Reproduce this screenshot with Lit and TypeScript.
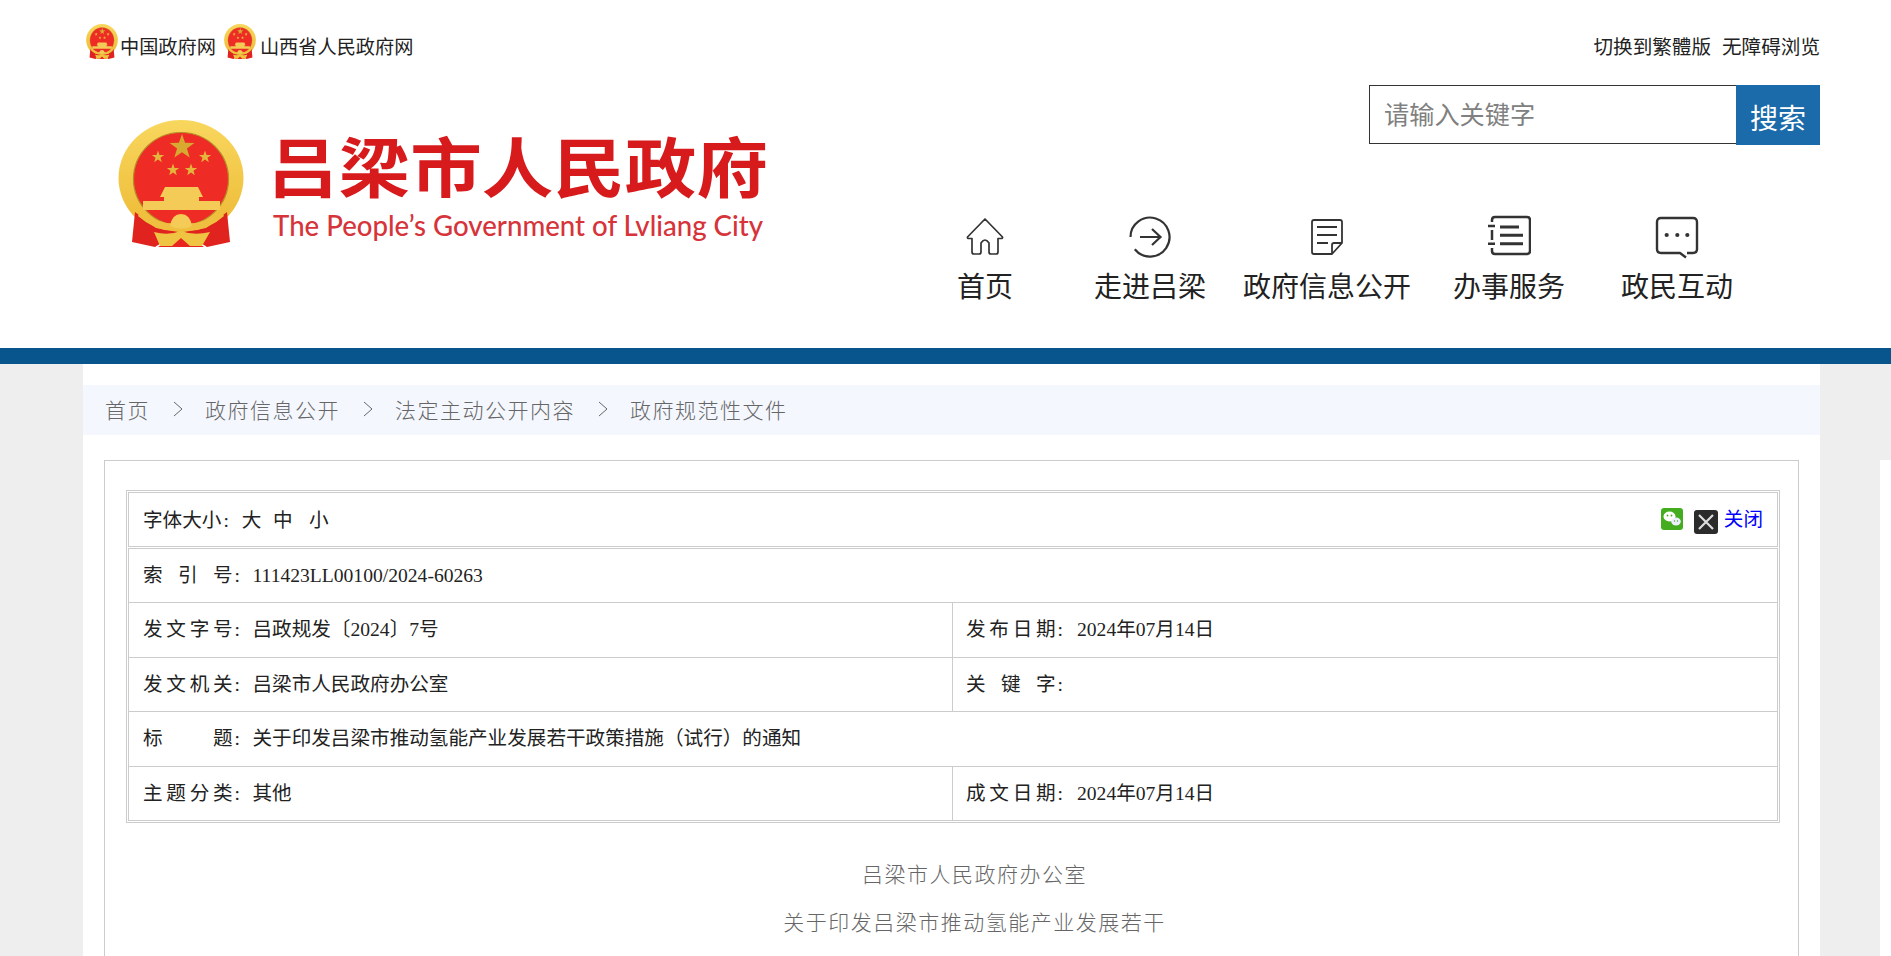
import { LitElement, html, css, svg } from "lit";
import { customElement } from "lit/decorators.js";

const star = (x: number, y: number, r: number, fill: string) => {
  const pts: string[] = [];
  for (let i = 0; i < 10; i++) {
    const a = -Math.PI / 2 + (i * Math.PI) / 5;
    const rr = i % 2 === 0 ? r : r * 0.4;
    pts.push(`${(x + rr * Math.cos(a)).toFixed(2)},${(y + rr * Math.sin(a)).toFixed(2)}`);
  }
  return svg`<polygon points=${pts.join(" ")} fill=${fill}/>`;
};

const emblemSvg = svg`
  <defs>
    <linearGradient id="gold" x1="0" y1="0" x2="0" y2="1">
      <stop offset="0" stop-color="#f8d75e"/><stop offset="1" stop-color="#edb934"/>
    </linearGradient>
  </defs>
  <ellipse cx="63" cy="58" rx="62.500" ry="58" fill="url(#gold)"/>
  <ellipse cx="63" cy="59" rx="47.500" ry="46.500" fill="#ee2b25" stroke="#b58d26" stroke-width="1.200"/>
  ${star(64, 27, 13, "#d8a930")}
  ${star(40, 37, 6.5, "#e4b63c")}
  ${star(87, 37, 6.5, "#e4b63c")}
  ${star(55, 50, 6.5, "#e4b63c")}
  ${star(73, 50, 6.5, "#e4b63c")}
  <path d="M47 67 H80 L85 77 H81 V81 H102 V90 H25 V81 H46 V77 H42 Z" fill="#f3cb56"/>
  <path d="M17 92 L14 122 L37 127 L60 112 L38 108 Z" fill="#e0231e"/>
  <path d="M109 92 L112 122 L89 127 L66 112 L88 108 Z" fill="#e0231e"/>
  <path d="M40 127 L63 112 L86 127 Z" fill="#e8261f"/>
  <path d="M23 90 Q40 106 63 103 Q86 106 103 90 L106 96 Q86 114 63 110 Q40 114 20 96 Z" fill="#efc040"/>
  <path d="M52 106 Q54 94 63 94 Q72 94 74 106 Q63 111 52 106 Z" fill="#f3cb56"/>
  <path d="M36 112 Q50 116 63 111 Q76 116 92 112 L84 126 H72 L63 118 L54 126 H42 Z" fill="#f0c443"/>
`;

const emblem = (cls: string) => html`<svg class=${cls} viewBox="0 0 126 127" preserveAspectRatio="none" aria-hidden="true">${emblemSvg}</svg>`;

type NavItem = { label: string; width: number; icon: unknown };

const navItems: NavItem[] = [
  {
    label: "首页",
    width: 170,
    icon: svg`<path d="M22 4 L39.500 22 Q40 23.500 38 23.500 H35 V37 Q35 39 33 39 H28 Q26 39 26 37 V28 Q22 22 18 28 V37 Q18 39 16 39 H11 Q9 39 9 37 V23.500 H6 Q4 23.500 4.500 22 Z" fill="none" stroke="#333" stroke-width="1.700" stroke-linejoin="round"/>`,
  },
  {
    label: "走进吕梁",
    width: 160,
    icon: svg`<path d="M2.500 22 A19.500 19.500 0 1 1 6.800 34.300" fill="none" stroke="#333" stroke-width="2.200"/><path d="M12 22 H32 M24 14 L32.500 22 L24 30" fill="none" stroke="#333" stroke-width="2.200"/>`,
  },
  {
    label: "政府信息公开",
    width: 194,
    icon: svg`<path d="M37 28 V7 Q37 5 35 5 H9 Q7 5 7 7 V37 Q7 39 9 39 H27 L37 28 H29 Q27 28 27 30 V39" fill="none" stroke="#333" stroke-width="1.800" stroke-linejoin="round"/><path d="M12 12 H32 M12 20 H32 M12 28 H23" stroke="#333" stroke-width="1.800"/>`,
  },
  {
    label: "办事服务",
    width: 170,
    icon: svg`<path d="M5 7 V5 Q5 2 8 2 H40 Q43 2 43 5 V36 Q43 39 40 39 H8 Q5 39 5 36 V33 M5 25 V15" fill="none" stroke="#333" stroke-width="2.500"/><path d="M13 12 H32 M13 20.300 H36 M13 28.700 H36" stroke="#333" stroke-width="3"/><path d="M1 11 H8 M1 28.700 H8" stroke="#333" stroke-width="2.600"/>`,
  },
  {
    label: "政民互动",
    width: 166,
    icon: svg`<path d="M32 38 H38 Q42 38 42 34 V7 Q42 3 38 3 H6 Q2 3 2 7 V34 Q2 38 6 38 H25 L31 42.500" fill="none" stroke="#333" stroke-width="2.400" stroke-linejoin="round"/><circle cx="11.700" cy="20" r="2.100" fill="#333"/><circle cx="22.300" cy="20" r="2.100" fill="#333"/><circle cx="32.300" cy="20" r="2.100" fill="#333"/>`,
  },
];

const crumbs = ["首页", "政府信息公开", "法定主动公开内容", "政府规范性文件"];

@customElement("app-root")
export class AppRoot extends LitElement {
  static styles = css`
    :host {
      display: block;
      position: relative;
      height: 956px;
      overflow: hidden;
      background: #eee;
      font-family: "Liberation Serif", "Noto Sans CJK SC", serif;
      color: #222;
    }
    a { color: inherit; text-decoration: none; }

    .header { background: #fff; height: 348px; padding: 0 71px 0 83px; box-sizing: border-box; display: flex; flex-direction: column; }
    .top { display: flex; justify-content: space-between; height: 85px; font-family: "Noto Sans CJK SC", sans-serif; }
    .top-left { display: flex; align-items: flex-start; padding-top: 24px; font-size: 19.200px; line-height: 46px; }
    .top-right { display: flex; gap: 11px; font-size: 19.600px; line-height: 46px; padding-top: 24px; }
    .small-emblem { width: 32px; height: 35px; margin: 0 2px 0 3px; }
    .top-link { margin-right: 5px; }
    .top-link2 { margin-left: 2px; }
    .top-left a, .top-right a { margin-top: -1px; }

    .main { display: flex; justify-content: space-between; flex: 1; }
    .logo { width: 680px; height: 145px; margin: 31px 0 0 33px; display: block; overflow: visible; }
    .logo-cn { font-family: "Noto Sans CJK SC", sans-serif; font-weight: 700; font-size: 65px; fill: #d71a1c; }
    .logo-en { font-family: Lato, "Liberation Sans", sans-serif; font-weight: 500; font-size: 28px; fill: #d6343a; }

    .right { display: flex; flex-direction: column; align-items: flex-end; }
    .search { display: flex; width: 451px; height: 60px; }
    .search-input { flex: 1; height: 59px; box-sizing: border-box; border: 1px solid #333; border-right: 0; padding: 0 14px 4px; display: flex; align-items: center; font-family: "Noto Sans CJK SC", sans-serif; font-size: 25.200px; color: #808080; }
    .search-btn { width: 84px; background: #1b6aaa; color: #fff; font-size: 28px; font-family: "Noto Sans CJK SC", sans-serif; display: flex; align-items: center; justify-content: center; padding-top: 3px; box-sizing: border-box; }

    .nav { display: flex; margin-top: 70px; margin-right: 60px; }
    .nav-item { display: flex; flex-direction: column; align-items: center; font-family: "Noto Sans CJK SC", sans-serif; font-size: 28px; line-height: 40px; color: #222; }
    .nav-icon { width: 44px; height: 44px; margin-bottom: 5.500px; }

    .bar { height: 16px; background: #08548c; }

    .page { margin: 0 71px 0 83px; background: #fff; height: 592px; padding-top: 21px; box-sizing: border-box; }
    .crumbs { height: 50px; background: #f4f7fe; display: flex; align-items: center; padding: 0 0 2px 22px; box-sizing: border-box; font-size: 21px; color: #666; letter-spacing: 1.500px; font-family: "Noto Sans CJK SC", sans-serif; font-weight: 300; }
    .sep { width: 10px; height: 16px; margin: 0 22.500px; }

    .box { margin: 25px 21px 0 21px; border: 1px solid #ccc; border-bottom: 0; height: 496px; padding: 29px 18px 0 21px; box-sizing: border-box; }
    .meta { border: 1px solid #ccc; padding: 1px; }
    .row { display: grid; grid-template-columns: 823px 1fr; height: 54.500px; border: 1px solid #ccc; border-top: 0; box-sizing: border-box; font-size: 19.600px; line-height: 28px; }
    .row.single { grid-template-columns: 1fr; }
    .row.head { border-top: 1px solid #ccc; margin-bottom: 1px; height: 55px; justify-content: space-between; display: flex; }
    .row.head .cell { padding-top: 2px; }
    .row.idx { border-top: 1px solid #ccc; height: 55px; }
    .cell { display: flex; align-items: center; padding: 1px 0 0 14px; box-sizing: border-box; white-space: pre; }
    .cell + .cell { border-left: 1px solid #ccc; padding-left: 13px; }
    .label { display: flex; justify-content: space-between; width: 99px; margin-right: 10.500px; }
    .cell + .cell .label { margin-right: 12px; }
    .label span:last-child { letter-spacing: 2px; }
    .fs-label { margin-right: 13px; }
    .colon { margin-left: 2px; }
    .fs-big { margin-right: 11.700px; }
    .fs-mid { margin-right: 16.400px; }
    .tools { display: flex; align-items: flex-start; padding-right: 14px; }
    .wx { width: 22px; height: 22px; margin: 15px 11px 0 0; }
    .xx { width: 24px; height: 24px; margin: 17px 6px 0 0; }
    .close { color: #00f; line-height: 24px; margin-top: 15px; }

    .doc { text-align: center; font-size: 21px; line-height: 48px; color: #666; letter-spacing: 1.500px; margin-top: 26px; font-family: "Noto Sans CJK SC", sans-serif; font-weight: 300; padding-left: 43px; }

    .edge { position: absolute; top: 460px; right: 0; width: 11px; bottom: 0; background: #fff; }
  `;

  private label(chars: string[]) {
    return html`<span class="label">${chars.map((c) => html`<span>${c}</span>`)}</span>`;
  }

  render() {
    return html`
      <div class="header">
        <div class="top">
          <div class="top-left">
            ${emblem("small-emblem")}<a class="top-link">中国政府网</a>
            ${emblem("small-emblem")}<a class="top-link2">山西省人民政府网</a>
          </div>
          <div class="top-right"><a>切换到繁體版</a><a>无障碍浏览</a></div>
        </div>
        <div class="main">
          <svg class="logo" viewBox="0 0 680 145">
            <svg x="2" y="4" width="126" height="127" viewBox="0 0 126 127">${emblemSvg}</svg>
            <text class="logo-cn" x="151" y="76" textLength="501" lengthAdjust="spacingAndGlyphs">吕梁市人民政府</text>
            <text class="logo-en" x="157" y="120" textLength="490" lengthAdjust="spacingAndGlyphs">The People’s Government of Lvliang City</text>
          </svg>
          <div class="right">
            <div class="search">
              <div class="search-input">请输入关键字</div>
              <div class="search-btn">搜索</div>
            </div>
            <nav class="nav">
              ${navItems.map(
                (n) => html`<a class="nav-item" style="width:${n.width}px"><svg class="nav-icon" viewBox="0 0 44 44">${n.icon}</svg>${n.label}</a>`
              )}
            </nav>
          </div>
        </div>
      </div>
      <div class="bar"></div>
      <div class="page">
        <div class="crumbs">
          ${crumbs.map(
            (c, i) => html`${i > 0
              ? html`<svg class="sep" viewBox="0 0 10 16"><path d="M1 1 L9 8 L1 15" fill="none" stroke="#666" stroke-width="1"/></svg>`
              : ""}<a>${c}</a>`
          )}
        </div>
        <div class="box">
          <div class="meta">
            <div class="row head">
              <div class="cell"><span class="fs-label">字体大小<span class="colon">:</span></span><a class="fs-big">大</a><a class="fs-mid">中</a><a>小</a></div>
              <div class="tools">
                <svg class="wx" viewBox="0 0 22 22"><rect width="22" height="22" rx="3" fill="#44ad1f"/><ellipse cx="8.500" cy="8.500" rx="6" ry="5" fill="#fff"/><ellipse cx="15" cy="13.500" rx="4.800" ry="4" fill="#eef"/><circle cx="6.500" cy="7.500" r=".9" fill="#44ad1f"/><circle cx="10.500" cy="7.500" r=".9" fill="#44ad1f"/><circle cx="13.500" cy="13" r=".7" fill="#44ad1f"/><circle cx="16.500" cy="13" r=".7" fill="#44ad1f"/></svg>
                <svg class="xx" viewBox="0 0 24 24"><rect width="24" height="24" rx="3" fill="#2b2b2b"/><path d="M5 5 L19 19 M19 5 L5 19" stroke="#ddd" stroke-width="2.200"/></svg>
                <a class="close">关闭</a>
              </div>
            </div>
            <div class="row single idx"><div class="cell">${this.label(["索", "引", "号:"])}111423LL00100/2024-60263</div></div>
            <div class="row">
              <div class="cell">${this.label(["发", "文", "字", "号:"])}吕政规发〔2024〕7号</div>
              <div class="cell">${this.label(["发", "布", "日", "期:"])}2024年07月14日</div>
            </div>
            <div class="row">
              <div class="cell">${this.label(["发", "文", "机", "关:"])}吕梁市人民政府办公室</div>
              <div class="cell">${this.label(["关", "键", "字:"])}</div>
            </div>
            <div class="row single"><div class="cell">${this.label(["标", "题:"])}关于印发吕梁市推动氢能产业发展若干政策措施（试行）的通知</div></div>
            <div class="row">
              <div class="cell">${this.label(["主", "题", "分", "类:"])}其他</div>
              <div class="cell">${this.label(["成", "文", "日", "期:"])}2024年07月14日</div>
            </div>
          </div>
          <div class="doc">
            <div>吕梁市人民政府办公室</div>
            <div>关于印发吕梁市推动氢能产业发展若干</div>
          </div>
        </div>
      </div>
      <div class="edge"></div>
    `;
  }
}
